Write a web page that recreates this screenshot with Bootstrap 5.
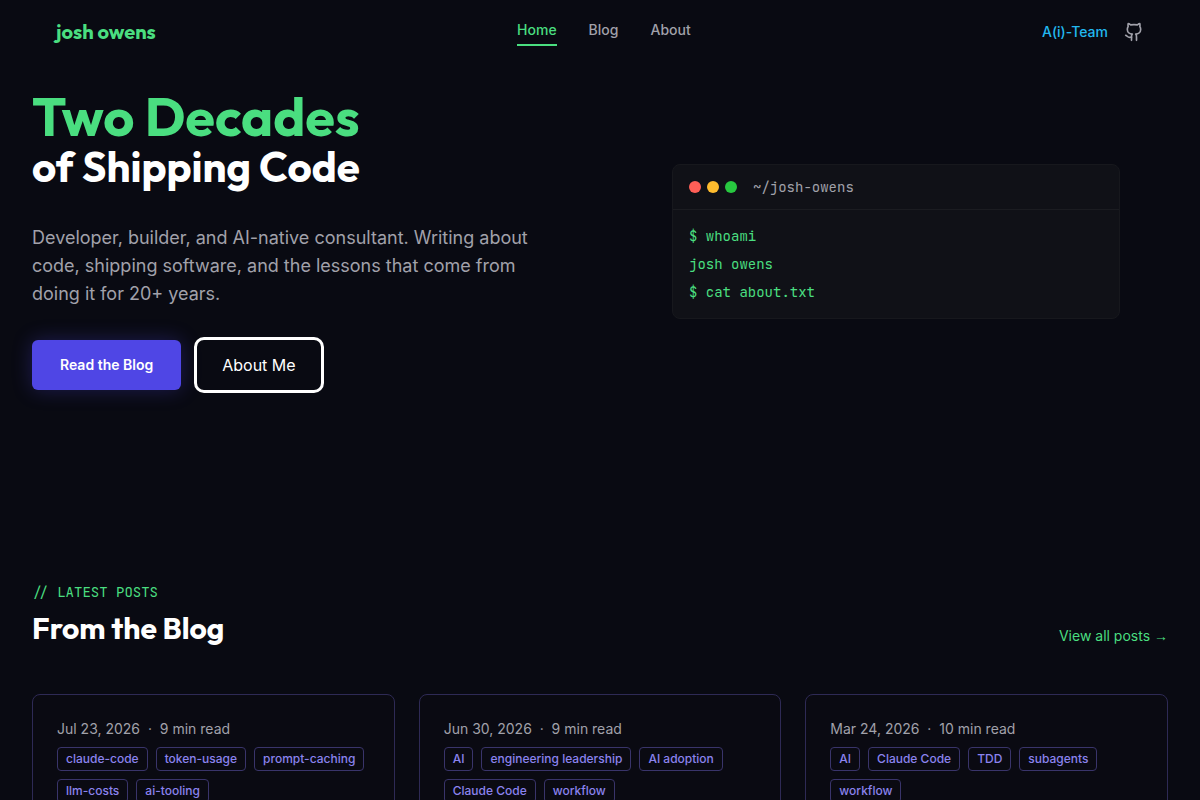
<!DOCTYPE html>
<html lang="en" data-bs-theme="dark">
<head>
<meta charset="utf-8">
<meta name="viewport" content="width=device-width, initial-scale=1">
<title>josh owens</title>
<link href="https://cdn.jsdelivr.net/npm/bootstrap@5.3.0/dist/css/bootstrap.min.css" rel="stylesheet">
<style>
:root { --green: #4ade80; --ink: #090a12; --muted: #a1a1aa; --indigo: #4f46e5; --violet: #8b83ee; --line: #2e2a55; }
body { background: var(--ink); color: #fff; font-family: Inter, "Liberation Sans", sans-serif; font-size: 14px; line-height: 20px; }
a { text-decoration: none; }
.display-face { font-family: Outfit, Lato, sans-serif; font-weight: 700; }
.code-face { font-family: "JetBrains Mono", "DejaVu Sans Mono", monospace; font-size: 14px; }
.text-green { color: var(--green); }
.text-soft { color: var(--muted); }
.site-nav { padding: 12px 56px; min-height: 64px; }
.brand { font-size: 20px; line-height: 28px; }
.site-links { gap: 32px; padding: 0 0 4px 10px; }
.site-link { display: block; padding: 6px 0 4px; color: var(--muted); font-weight: 500; border-bottom: 2px solid transparent; }
.site-link.active { color: var(--green); border-color: var(--green); }
.team-link { color: #22b8f0; font-weight: 500; }
.hero { padding: 26px 32px 0; min-height: 518px; }
.hero-top { font-size: 54px; line-height: 52px; }
.hero-sub { font-size: 42px; line-height: 50px; }
.hero-copy { font-size: 18px; line-height: 28px; max-width: 512px; margin: 32px 0 29px; }
.hero-actions { gap: 13px; }
.btn-read { background: var(--indigo); color: #fff; font-size: 14px; line-height: 20px; font-weight: 600; padding: 14px 28px; border: 0; border-radius: 6px; box-shadow: 0 0 20px rgba(79,70,229,.3); height: 50px; }
.btn-about { color: #fff; font-size: 16px; padding: 12px 25px; border: 3px solid #fff; border-radius: 10px; height: 56px; }
.btn-read:hover, .btn-about:hover { background: #6366f1; color: #fff; }
.terminal { max-width: 448px; background: #101117; border: 1px solid #17181d; border-radius: 8px; }
.terminal-bar { padding: 12px 16px; border-bottom: 1px solid #1b1c21; }
.terminal-body { padding: 12px 16px; line-height: 28px; }
.dots { gap: 6px; }
.dot { width: 12px; height: 12px; border-radius: 50%; }
.dot-close { background: #ff5f57; }
.dot-min { background: #febc2e; }
.dot-max { background: #28c840; }
.posts { padding: 0 32px 32px; }
.posts-head { margin-bottom: 46px; }
.posts-title { font-size: 30px; line-height: 40px; margin-top: 6px; }
.all-posts { margin-bottom: 2px; }
.arrow { font-family: "Liberation Sans", sans-serif; }
.post-card { border: 1px solid var(--line); border-radius: 8px; padding: 24px; background: #0a0a12; }
.tag { color: var(--violet); border: 1px solid #39346a; border-radius: 4px; padding: 3px 8px; font-size: 12px; line-height: 16px; font-weight: 500; }
</style>
</head>
<body>
<header class="site-nav d-flex align-items-center justify-content-between">
  <a href="#" class="brand display-face text-green">josh owens</a>
  <nav class="site-links d-flex">
    <a href="#" class="site-link active" aria-current="page">Home</a>
    <a href="#" class="site-link">Blog</a>
    <a href="#" class="site-link">About</a>
  </nav>
  <div class="d-flex align-items-center gap-3">
    <a href="#" class="team-link">A(i)-Team</a>
    <a href="#" class="text-soft d-flex" aria-label="GitHub"><svg width="20" height="20" viewBox="0 0 24 24" fill="none" stroke="currentColor" stroke-width="2" stroke-linecap="round" stroke-linejoin="round" aria-hidden="true"><path d="M15 22v-4a4.800 4.800 0 0 0-1-3.500c3 0 6-2 6-5.500.08-1.250-.27-2.480-1-3.500.28-1.150.28-2.350 0-3.500 0 0-1 0-3 1.500-2.640-.5-5.360-.5-8 0C6 2 5 2 5 2c-.3 1.150-.3 2.350 0 3.500A5.403 5.403 0 0 0 4 9c0 3.500 3 5.500 6 5.500-.39.49-.68 1.050-.85 1.650-.17.6-.22 1.230-.15 1.850v4"/><path d="M9 18c-4.510 2-5-2-7-2"/></svg></a>
  </div>
</header>
<main>
  <section class="hero">
    <div class="row gx-5 align-items-center">
      <div class="col-md-6">
        <h1 class="display-face mb-0"><span class="hero-top text-green d-block">Two Decades</span><span class="hero-sub d-block">of Shipping Code</span></h1>
        <p class="hero-copy text-soft">Developer, builder, and AI-native consultant. Writing about code, shipping software, and the lessons that come from doing it for 20+ years.</p>
        <div class="hero-actions d-flex align-items-center flex-wrap">
          <button type="button" class="btn btn-read">Read the Blog</button>
          <button type="button" class="btn btn-about">About Me</button>
        </div>
      </div>
      <div class="col-md-6">
        <div class="terminal code-face mx-auto">
          <div class="terminal-bar d-flex align-items-center">
            <div class="dots d-flex me-3"><span class="dot dot-close"></span><span class="dot dot-min"></span><span class="dot dot-max"></span></div>
            <span class="text-soft">~/josh-owens</span>
          </div>
          <div class="terminal-body text-green"><div>$ whoami</div><div>josh owens</div><div>$ cat about.txt</div></div>
        </div>
      </div>
    </div>
  </section>
  <section class="posts">
    <div class="posts-head d-flex justify-content-between align-items-end">
      <div>
        <div class="code-face text-green">// LATEST POSTS</div>
        <h2 class="posts-title display-face mb-0">From the Blog</h2>
      </div>
      <a href="#" class="all-posts text-green">View all posts <span class="arrow">→</span></a>
    </div>
    <div class="row g-4">
      <div class="col-md-4"><article class="post-card h-100">
        <div class="text-soft mb-2">Jul 23, 2026 &nbsp;·&nbsp; 9 min read</div>
        <div class="d-flex flex-wrap gap-2"><span class="tag">claude-code</span><span class="tag">token-usage</span><span class="tag">prompt-caching</span><span class="tag">llm-costs</span><span class="tag">ai-tooling</span></div>
      </article></div>
      <div class="col-md-4"><article class="post-card h-100">
        <div class="text-soft mb-2">Jun 30, 2026 &nbsp;·&nbsp; 9 min read</div>
        <div class="d-flex flex-wrap gap-2"><span class="tag">AI</span><span class="tag">engineering leadership</span><span class="tag">AI adoption</span><span class="tag">Claude Code</span><span class="tag">workflow</span></div>
      </article></div>
      <div class="col-md-4"><article class="post-card h-100">
        <div class="text-soft mb-2">Mar 24, 2026 &nbsp;·&nbsp; 10 min read</div>
        <div class="d-flex flex-wrap gap-2"><span class="tag">AI</span><span class="tag">Claude Code</span><span class="tag">TDD</span><span class="tag">subagents</span><span class="tag">workflow</span></div>
      </article></div>
    </div>
  </section>
</main>
<script src="https://cdn.jsdelivr.net/npm/bootstrap@5.3.0/dist/js/bootstrap.bundle.min.js"></script>
</body>
</html>
